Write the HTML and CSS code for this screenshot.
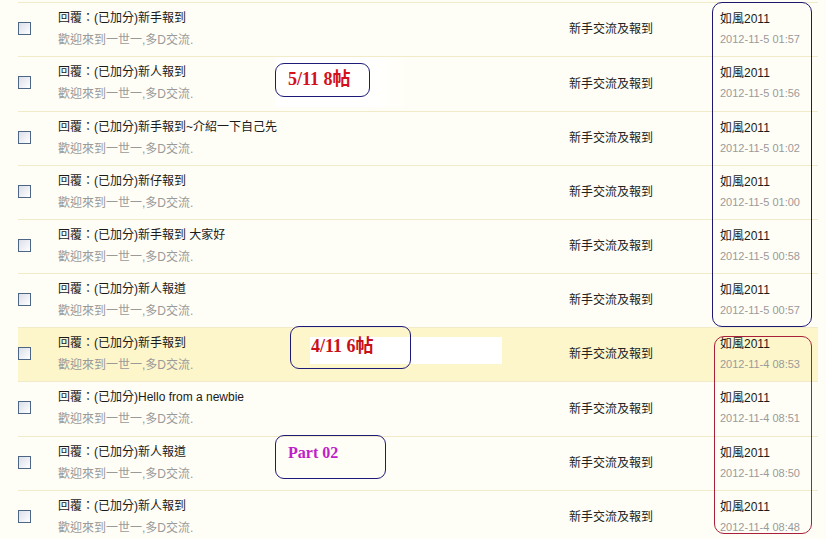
FILE: index.html
```html
<!DOCTYPE html>
<html>
<head>
<meta charset="utf-8">
<link rel="stylesheet" href="styles.css">
</head>
<body>
<div class="page">
  <div class="list">
    <div class="row">
      <div class="chk"><span class="box"></span></div>
      <div class="subject"><div class="title">回覆：(已加分)新手報到</div><div class="sub">歡迎來到一世一,多D交流.</div></div>
      <div class="cat">新手交流及報到</div>
      <div class="author"><div class="name">如風2011</div><div class="date">2012-11-5 01:57</div></div>
    </div>
    <div class="row tall">
      <div class="chk"><span class="box"></span></div>
      <div class="subject"><div class="title">回覆：(已加分)新人報到</div><div class="sub">歡迎來到一世一,多D交流.</div></div>
      <div class="cat">新手交流及報到</div>
      <div class="author"><div class="name">如風2011</div><div class="date">2012-11-5 01:56</div></div>
    </div>
    <div class="row">
      <div class="chk"><span class="box"></span></div>
      <div class="subject"><div class="title">回覆：(已加分)新手報到~介紹一下自己先</div><div class="sub">歡迎來到一世一,多D交流.</div></div>
      <div class="cat">新手交流及報到</div>
      <div class="author"><div class="name">如風2011</div><div class="date">2012-11-5 01:02</div></div>
    </div>
    <div class="row">
      <div class="chk"><span class="box"></span></div>
      <div class="subject"><div class="title">回覆：(已加分)新仔報到</div><div class="sub">歡迎來到一世一,多D交流.</div></div>
      <div class="cat">新手交流及報到</div>
      <div class="author"><div class="name">如風2011</div><div class="date">2012-11-5 01:00</div></div>
    </div>
    <div class="row">
      <div class="chk"><span class="box"></span></div>
      <div class="subject"><div class="title">回覆：(已加分)新手報到 大家好</div><div class="sub">歡迎來到一世一,多D交流.</div></div>
      <div class="cat">新手交流及報到</div>
      <div class="author"><div class="name">如風2011</div><div class="date">2012-11-5 00:58</div></div>
    </div>
    <div class="row">
      <div class="chk"><span class="box"></span></div>
      <div class="subject"><div class="title">回覆：(已加分)新人報道</div><div class="sub">歡迎來到一世一,多D交流.</div></div>
      <div class="cat">新手交流及報到</div>
      <div class="author"><div class="name">如風2011</div><div class="date">2012-11-5 00:57</div></div>
    </div>
    <div class="row hl">
      <div class="chk"><span class="box"></span></div>
      <div class="subject"><div class="title">回覆：(已加分)新手報到</div><div class="sub">歡迎來到一世一,多D交流.</div></div>
      <div class="cat">新手交流及報到</div>
      <div class="author"><div class="name">如風2011</div><div class="date">2012-11-4 08:53</div></div>
    </div>
    <div class="row tall">
      <div class="chk"><span class="box"></span></div>
      <div class="subject"><div class="title">回覆：(已加分)Hello from a newbie</div><div class="sub">歡迎來到一世一,多D交流.</div></div>
      <div class="cat">新手交流及報到</div>
      <div class="author"><div class="name">如風2011</div><div class="date">2012-11-4 08:51</div></div>
    </div>
    <div class="row">
      <div class="chk"><span class="box"></span></div>
      <div class="subject"><div class="title">回覆：(已加分)新人報道</div><div class="sub">歡迎來到一世一,多D交流.</div></div>
      <div class="cat">新手交流及報到</div>
      <div class="author"><div class="name">如風2011</div><div class="date">2012-11-4 08:50</div></div>
    </div>
    <div class="row">
      <div class="chk"><span class="box"></span></div>
      <div class="subject"><div class="title">回覆：(已加分)新人報到</div><div class="sub">歡迎來到一世一,多D交流.</div></div>
      <div class="cat">新手交流及報到</div>
      <div class="author"><div class="name">如風2011</div><div class="date">2012-11-4 08:48</div></div>
    </div>
  </div>

  <div class="patch patch1"></div>
  <div class="patch patch2"></div>
  <div class="note note1">5/11 8帖</div>
  <div class="note note2">4/11 6帖</div>
  <div class="note note3">Part 02</div>
  <div class="ring ring-blue"></div>
  <div class="ring ring-red"></div>
</div>
</body>
</html>
```
FILE: styles.css
```css
html, body {
  margin: 0;
  padding: 0;
  background: #ffffff;
}
.page {
  position: relative;
  width: 826px;
  height: 539px;
  overflow: hidden;
  background: #fffef6;
  font-family: "Liberation Sans", "Noto Sans CJK TC", sans-serif;
  font-size: 12px;
}
.list {
  padding-top: 2px;
  margin-left: 18px;
  width: 800px;
}
.row {
  display: flex;
  height: 53px;
  border-top: 1px solid #f2ebc9;
  background: #fffef6;
}
.row.tall {
  height: 54px;
}
.row.hl {
  background: #fdf6cb;
}
.chk {
  width: 40px;
  display: flex;
  align-items: center;
  padding-bottom: 3px;
}
.box {
  display: block;
  width: 11px;
  height: 11px;
  border: 1px solid #4d6686;
  background: linear-gradient(135deg, #dcdfe8 0%, #f4f5f8 70%, #ffffff 100%);
}
.subject {
  width: 511px;
  padding-top: 6px;
}
.title {
  line-height: 18px;
  color: #1a1a1a;
}
.sub {
  margin-top: 4px;
  line-height: 18px;
  color: #9a9a9a;
}
.cat {
  width: 151px;
  display: flex;
  align-items: center;
  padding-bottom: 4px;
  color: #222222;
}
.author {
  padding-top: 7px;
}
.name {
  line-height: 18px;
  color: #1a1a1a;
}
.date {
  margin-top: 2px;
  line-height: 18px;
  font-size: 11px;
  color: #9a9a9a;
}
.patch {
  position: absolute;
  background: #ffffff;
}
.patch1 {
  left: 275px;
  top: 57px;
  width: 132px;
  height: 50px;
  background: linear-gradient(90deg, #ffffff 70%, #fffef6 100%);
}
.patch2 {
  left: 310px;
  top: 337px;
  width: 192px;
  height: 27px;
}
.note {
  position: absolute;
  box-sizing: border-box;
  border: 1.5px solid #1e1a78;
  border-radius: 9px;
  font-family: "Liberation Serif", "Noto Sans CJK TC", serif;
  font-weight: bold;
  line-height: 18px;
}
.note1 {
  left: 275px;
  top: 63px;
  width: 95px;
  height: 34px;
  padding: 6px 0 0 12px;
  font-size: 18px;
  color: #d4101c;
}
.note2 {
  left: 290px;
  top: 326px;
  width: 121px;
  height: 43px;
  padding: 10px 0 0 20px;
  font-size: 18px;
  color: #c8101a;
}
.note3 {
  left: 275px;
  top: 435px;
  width: 111px;
  height: 44px;
  padding: 8px 0 0 12px;
  font-size: 16px;
  color: #c020c8;
}
.ring {
  position: absolute;
  box-sizing: border-box;
  border-radius: 10px;
}
.ring-blue {
  left: 712px;
  top: 2px;
  width: 100px;
  height: 325px;
  border: 1.5px solid #1c1870;
}
.ring-red {
  left: 714px;
  top: 336px;
  width: 98px;
  height: 198px;
  border: 1.5px solid #a8203a;
}
```
